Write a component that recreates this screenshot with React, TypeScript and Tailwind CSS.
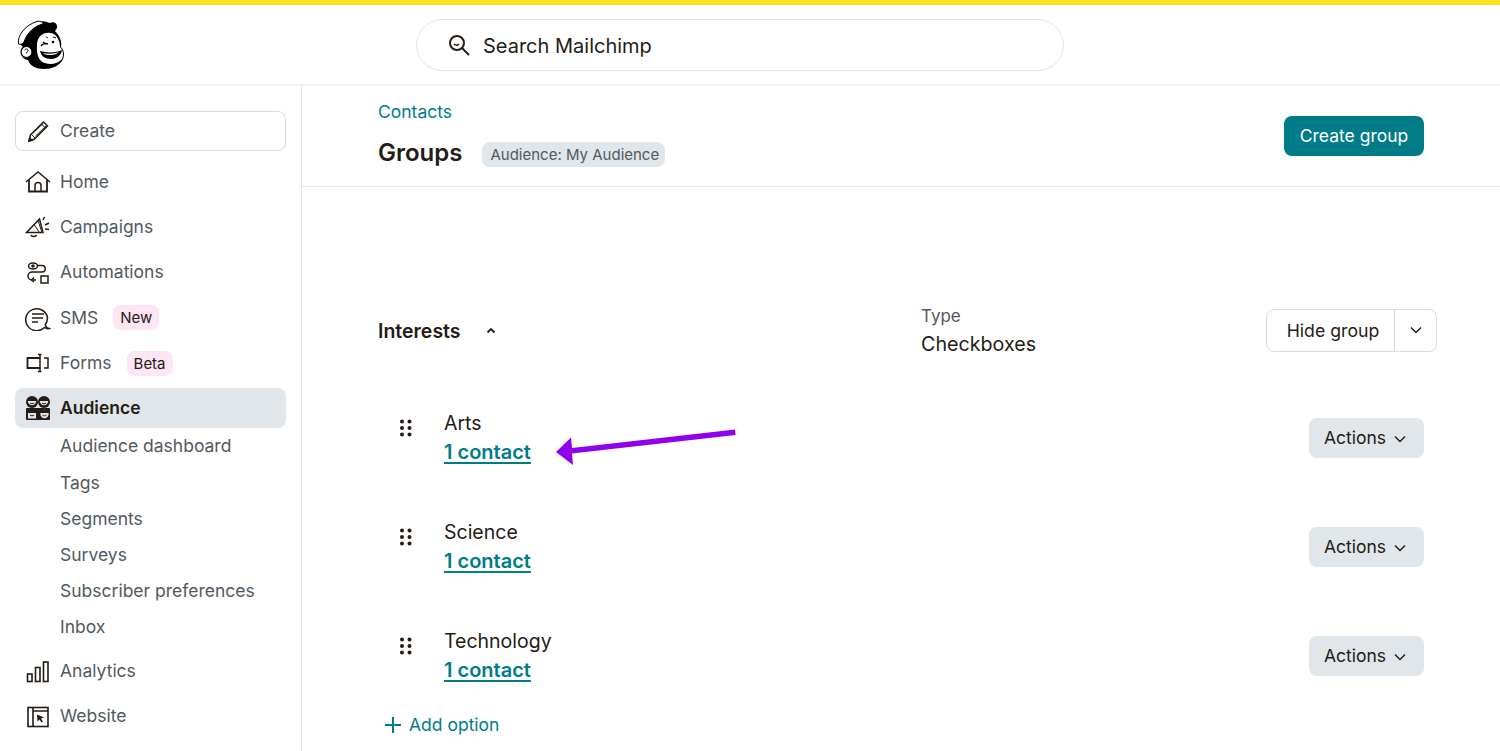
import React from "react";

const S = { fill: "none", stroke: "#241c15", strokeWidth: 1.5 } as const;

function Logo() {
  return (
    <svg width="50" height="50" viewBox="16 20 50 50">
      <path d="M20 44C18 36 26 25 38 22c6-2 10 1 12 1 4-2 8 1 7 5l-2 3c5 5 7 11 6 16 3 3 4 8 2 12-3 7-12 10-19 10-8 0-14-3-16-9-4 0-7-4-7-8 0-3 1-4 2-5z" fill="#000" />
      <path d="M18.500 44C17 36 25 25 37 21.500c3-1 6 .5 6 2.500-9 2-16 9-19 18-1 2-4 3-5.500 2z" fill="#fff" stroke="#000" strokeWidth="1" />
      <circle cx="26.500" cy="52" r="5.500" fill="#fff" stroke="#000" strokeWidth="1.200" />
      <path d="M24.500 50c1-1.500 3.500-1 3.500.5 0 1-1.500 1.500-1.500 3" fill="none" stroke="#000" strokeWidth="1" />
      <path d="M37 45c0-8 6-13 13-12 6 0 10 7 10 14 3 3 4 8 2 12-4 5-12 6-17 4-5-1-9-7-8-18z" fill="#fff" />
      <path d="M41 46c1-2 4-3 7-2" fill="none" stroke="#000" strokeWidth="1.500" />
      <path d="M43 42l3 2" fill="none" stroke="#000" strokeWidth="1.200" />
      <circle cx="53" cy="42" r="1.300" fill="#000" />
      <path d="M46 37c1 0 2 1 2 1M53 37l3 1" fill="none" stroke="#000" strokeWidth="1" />
      <path d="M40 51c6 2 16 2 22-1-1 6-6 9-11 9-6 0-10-3-11-8z" fill="#000" />
      <path d="M43 53c5 1 11 1 16-1-2 2-5 3-8 3-3 0-6 0-8-2z" fill="#fff" />
    </svg>
  );
}

const icons: Record<string, React.ReactNode> = {
  pencil: (
    <svg width="24" height="24" viewBox="0 0 24 24" {...S}>
      <path d="M3 22l1.500-6L17.500 3l4 4L8.500 20z" />
      <path d="M15.500 5l4 4M5 15l4 4M7 14L17 4.500M9.500 17L20 7" strokeWidth="1" />
      <path d="M3 22l.7-3 2.300 2.300z" fill="#241c15" />
    </svg>
  ),
  home: (
    <svg width="26" height="24" viewBox="0 0 26 24" {...S}>
      <path d="M1 12L13 2l12 10" />
      <path d="M4 10v11.500h18V10" strokeWidth="1.800" />
      <path d="M10 21.500v-6a3 3 0 016 0v6" />
    </svg>
  ),
  campaigns: (
    <svg width="26" height="24" viewBox="0 0 26 24" {...S}>
      <path d="M1.500 17.500L14.500 4l3.500 13.500z" />
      <path d="M9 9.500l5.500 8M13 5.500l4 12" strokeWidth="1" />
      <path d="M6 20c.5 2 5 2 5.500 0" />
      <path d="M18 5l1.500-3M20 10l4-2M20 14l4 .5" />
    </svg>
  ),
  automations: (
    <svg width="24" height="24" viewBox="0 0 24 24" {...S}>
      <ellipse cx="7" cy="5" rx="4.500" ry="3" />
      <circle cx="7" cy="5" r="1" fill="#241c15" />
      <path d="M12 4.500h4a3 3 0 010 6.500H6a3.500 3.500 0 000 8h4" />
      <path d="M8 16.500l-2.500 2.500L8 21" />
      <rect x="15" y="15" width="7" height="7" />
    </svg>
  ),
  sms: (
    <svg width="26" height="26" viewBox="0 0 26 26" {...S}>
      <path d="M24 23.500c-2 .5-3.500-.3-4.500-1A11 11 0 1122.500 12.500c0 3-1 5.500-2.200 7 .3 2 2 3.500 3.700 4z" />
      <path d="M7 9h12M7 13h11M7 17h6" />
    </svg>
  ),
  forms: (
    <svg width="24" height="22" viewBox="0 0 24 22" {...S}>
      <path d="M14 6H1.500v10H14" strokeWidth="1.800" />
      <path d="M12 2.500h3.500M12 19.500h3.500M14 2.500v17" strokeWidth="1.500" />
      <path d="M18 6h4v10h-4" />
    </svg>
  ),
  audience: (
    <svg width="26" height="26" viewBox="0 0 26 26">
      <circle cx="7" cy="7" r="6" fill="#241c15" />
      <circle cx="19" cy="7" r="6" fill="#241c15" />
      <path d="M2.800 6h8.400a4.200 4.200 0 01-8.400 0z" fill="#e0e6e9" />
      <path d="M14.800 6h8.400a4.200 4.200 0 01-8.400 0z" fill="#e0e6e9" />
      <path d="M5 8c1 1 3 1 4 0M17 8c1 1 3 1 4 0" fill="none" stroke="#241c15" strokeWidth="1" />
      <rect x="1" y="13" width="24" height="12" rx="1" fill="#241c15" />
      <rect x="3" y="18" width="8" height="5.500" fill="#e0e6e9" />
      <path d="M5 20c1 1 3 1 4 0" fill="none" stroke="#241c15" strokeWidth="1" />
      <circle cx="19.500" cy="19" r="4.200" fill="#e0e6e9" />
      <path d="M15 15h9v3h-9z" fill="#241c15" />
      <path d="M17.500 20c1 1 3 1 4 0" fill="none" stroke="#241c15" strokeWidth="1" />
    </svg>
  ),
  analytics: (
    <svg width="24" height="24" viewBox="0 0 24 24" {...S} strokeWidth="1.600">
      <rect x="1.500" y="14" width="4.500" height="7.500" />
      <rect x="9.500" y="7.500" width="4.500" height="14" />
      <rect x="17.500" y="2" width="4.500" height="19.500" />
    </svg>
  ),
  website: (
    <svg width="24" height="24" viewBox="0 0 24 24" {...S} strokeWidth="1.600">
      <rect x="2" y="2.500" width="20" height="19" />
      <path d="M7 2.500v19M7 6h15" />
      <path d="M11 9.500l7 3-3 1 2 3-1.500 1-2-3-2 2z" fill="#241c15" stroke="none" />
    </svg>
  ),
};

function Grip() {
  return (
    <svg width="12" height="18" viewBox="0 0 12 18" fill="#241c15" className="mt-[10px] ml-[98px] shrink-0">
      {[2.500, 9, 15.500].flatMap((y) => [2, 9.500].map((x) => <circle key={`${x}-${y}`} cx={x} cy={y} r="2" />))}
    </svg>
  );
}

function Chevron({ size = 12 }: { size?: number }) {
  return (
    <svg width={size} height={size} viewBox="0 0 12 12" fill="none" stroke="#241c15" strokeWidth="1.400">
      <path d="M1 3.500l5 5 5-5" />
    </svg>
  );
}

function NavItem({ icon, label, badge, active }: { icon: string; label: string; badge?: string; active?: boolean }) {
  return (
    <div className={`flex h-10 items-center rounded-lg ${active ? "bg-[#e0e6e9] font-semibold text-[#241c15]" : "text-[#52595f]"}`}>
      <div className="flex w-[45px] shrink-0 justify-center pl-[1px]">{icons[icon]}</div>
      <span className="text-[17.500px]">{label}</span>
      {badge && <span className="ml-[15px] rounded-lg bg-[#fde5f3] px-[7px] py-[3px] text-[15px] leading-[19px] text-[#241c15]">{badge}</span>}
    </div>
  );
}

function Option({ name }: { name: string }) {
  return (
    <div className="flex h-[109px] items-start pr-[76px]">
      <Grip />
      <div className="ml-[32px] flex-1">
        <div className="text-[19.500px] leading-[29px] text-[#241c15]">{name}</div>
        <a className="text-[20px] leading-[29px] font-semibold text-[#007c89] underline decoration-2 underline-offset-[3px]">1 contact</a>
      </div>
      <button className="mt-[9px] flex h-10 w-[115px] items-center justify-center gap-[8px] rounded-lg bg-[#e0e6e9] pt-[1px] pr-[3px] text-[17.500px] text-[#241c15]">
        Actions <Chevron />
      </button>
    </div>
  );
}

export default function App() {
  return (
    <div className="relative h-[751px] w-[1500px] overflow-hidden bg-white font-['Inter','Liberation_Sans',sans-serif]">
      <div className="h-[5px] bg-[#ffe01b]" />
      <header className="flex h-[81px] items-center border-b-2 border-[#eff2f2]">
        <div className="ml-[16px] w-[400px]">
          <Logo />
        </div>
        <div className="flex h-[52px] w-[648px] items-center rounded-full border border-[#e0e6e9] pl-[31px] text-[20px] text-[#241c15]">
          <svg width="22" height="22" viewBox="0 0 22 22" fill="none" stroke="#241c15" strokeWidth="2" className="mr-[13px]">
            <circle cx="9" cy="9" r="7" />
            <path d="M14 14l7 7" />
            <path d="M6 10c1.500 1.500 4 1.500 5 0" strokeWidth="1.500" />
          </svg>
          <span className="pt-[2px]">Search Mailchimp</span>
        </div>
      </header>
      <div className="flex h-[665px]">
        <aside className="w-[302px] shrink-0 border-r border-[#e0e6e9] px-[15px] pt-[25px]">
          <div className="flex h-10 w-[271px] items-center rounded-lg border border-[#d5dde1] pl-[10px] text-[17.500px] text-[#52595f]">
            <div className="w-[34px] shrink-0">{icons.pencil}</div>
            <span>Create</span>
          </div>
          <div className="mt-[11px] flex flex-col gap-[5.300px]">
            <NavItem icon="home" label="Home" />
            <NavItem icon="campaigns" label="Campaigns" />
            <NavItem icon="automations" label="Automations" />
            <NavItem icon="sms" label="SMS" badge="New" />
            <NavItem icon="forms" label="Forms" badge="Beta" />
            <NavItem icon="audience" label="Audience" active />
          </div>
          <div className="flex flex-col pl-[45px] text-[17.500px] text-[#52595f]">
            {["Audience dashboard", "Tags", "Segments", "Surveys", "Subscriber preferences", "Inbox"].map((t) => (
              <div key={t} className="flex h-[36.200px] items-center">{t}</div>
            ))}
          </div>
          <div className="mt-[6px] flex flex-col gap-[5px]">
            <NavItem icon="analytics" label="Analytics" />
            <NavItem icon="website" label="Website" />
          </div>
        </aside>
        <main className="min-w-0 flex-1">
          <div className="flex h-[101px] items-start justify-between border-b border-[#e0e6e9] pr-[76px] pl-[76px]">
            <div className="pt-[13px]">
              <div className="text-[17.500px] leading-[25px] text-[#007c89]">Contacts</div>
              <div className="mt-[13px] flex items-center">
                <h1 className="text-[24px] leading-[32px] font-semibold text-[#241c15]">Groups</h1>
                <span className="mt-[3px] ml-[20px] flex h-[25px] items-center rounded-lg bg-[#e0e6e9] pt-[2px] pr-[6px] pl-[8px] text-[15px] text-[#52595f]">Audience: My Audience</span>
              </div>
            </div>
            <button className="mt-[30px] flex h-10 w-[140px] items-center justify-center rounded-lg bg-[#007c89] text-[17.500px] text-white">Create group</button>
          </div>
          <div className="flex items-center pt-[115px] pr-[63px] pl-[76px]">
            <div className="flex w-[543px] items-center">
              <span className="pt-[4px] text-[19.500px] font-semibold text-[#241c15]">Interests</span>
              <svg width="12" height="12" viewBox="0 0 12 12" fill="none" stroke="#241c15" strokeWidth="1.800" className="mt-[2px] ml-[24px]">
                <path d="M2.500 7.500L6 4l3.500 3.500" />
              </svg>
            </div>
            <div className="flex-1">
              <div className="text-[17px] leading-[28px] text-[#52595f]">Type</div>
              <div className="text-[19.700px] leading-[28px] text-[#241c15]">Checkboxes</div>
            </div>
            <div className="flex h-[43px] w-[171px] rounded-lg border border-[#d5dde1] text-[17.700px] text-[#241c15]">
              <div className="flex flex-1 items-center justify-center border-r border-[#d5dde1] pt-[2px] pl-[5px]">Hide group</div>
              <div className="flex w-[41px] items-center justify-center"><Chevron /></div>
            </div>
          </div>
          <div className="pt-[51px]">
            <Option name="Arts" />
            <Option name="Science" />
            <Option name="Technology" />
          </div>
          <div className="mt-[-24px] flex items-center pl-[82px] text-[17.500px] text-[#007c89]">
            <svg width="18" height="18" viewBox="0 0 18 18" stroke="#007c89" strokeWidth="2" className="mr-[7px]">
              <path d="M9 1v16M1 9h16" />
            </svg>
            Add option
          </div>
        </main>
      </div>
      <svg width="184" height="44" viewBox="0 0 184 44" className="absolute top-[426px] left-[554px]">
        <path d="M181 3.500L18 22l-1-10.500L2 26l17 13-1-11.500L181.500 9z" fill="#9000ea" />
      </svg>
    </div>
  );
}
